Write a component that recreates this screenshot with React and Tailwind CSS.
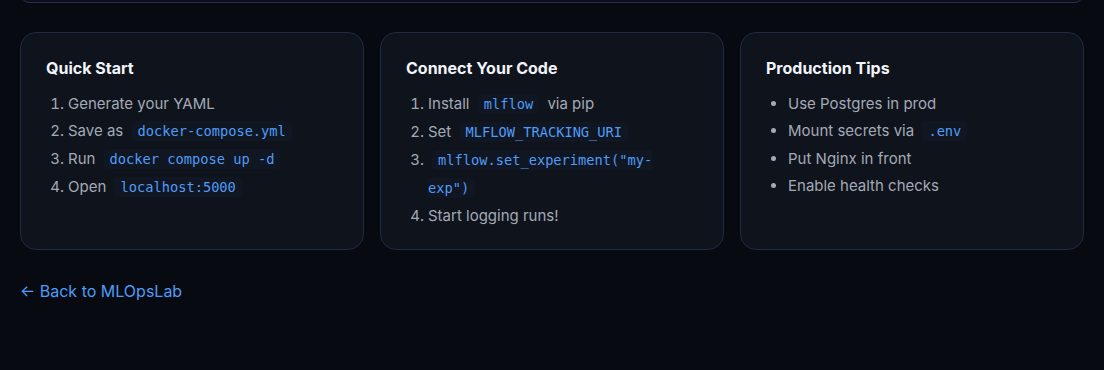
import React from "react";

const Code = ({ children }) => (
  <code className="mx-1 rounded px-1.5 py-0.5 bg-[#111623] text-[#4f9cf7] text-[13.7px] [font-family:'DejaVu_Sans_Mono',monospace]">
    {children}
  </code>
);

const Card = ({ title, children }) => (
  <div className="rounded-2xl border border-[#1f2a44] bg-[#0f131c] px-[25px] pt-[23px] h-[218px]">
    <h3 className="text-[16px] font-bold text-[#f1f5f9] leading-6 mb-[10px]">{title}</h3>
    {children}
  </div>
);

export default function App() {
  return (
    <div className="min-h-[370px] bg-[#070a10] overflow-hidden px-5 [font-family:Inter,'Noto_Sans',sans-serif]">
      <div className="h-[19px] -mt-4 rounded-2xl border border-[#2a2d52] bg-[#0c0f19]" />
      <div className="grid grid-cols-3 gap-4 mt-[29px]">
        <Card title="Quick Start">
          <ol className="list-decimal pl-[22px] text-[15px] leading-[27px] text-[#a3aab6]">
            <li>Generate your YAML</li>
            <li>Save as <Code>docker-compose.yml</Code></li>
            <li>Run <Code>docker compose up -d</Code></li>
            <li>Open <Code>localhost:5000</Code></li>
          </ol>
        </Card>
        <Card title="Connect Your Code">
          <ol className="list-decimal pl-[22px] text-[15px] leading-[27px] text-[#a3aab6]">
            <li>Install <Code>mlflow</Code> via pip</li>
            <li>Set <Code>MLFLOW_TRACKING_URI</Code></li>
            <li><Code>mlflow.set_experiment("my-exp")</Code></li>
            <li>Start logging runs!</li>
          </ol>
        </Card>
        <Card title="Production Tips">
          <ul className="list-disc pl-[22px] text-[15px] leading-[27px] text-[#a3aab6]">
            <li>Use Postgres in prod</li>
            <li>Mount secrets via <Code>.env</Code></li>
            <li>Put Nginx in front</li>
            <li>Enable health checks</li>
          </ul>
        </Card>
      </div>
      <div className="mt-[29px]">
        <a href="#" className="text-[16px] text-[#4f9cf7]">← Back to MLOpsLab</a>
      </div>
    </div>
  );
}
